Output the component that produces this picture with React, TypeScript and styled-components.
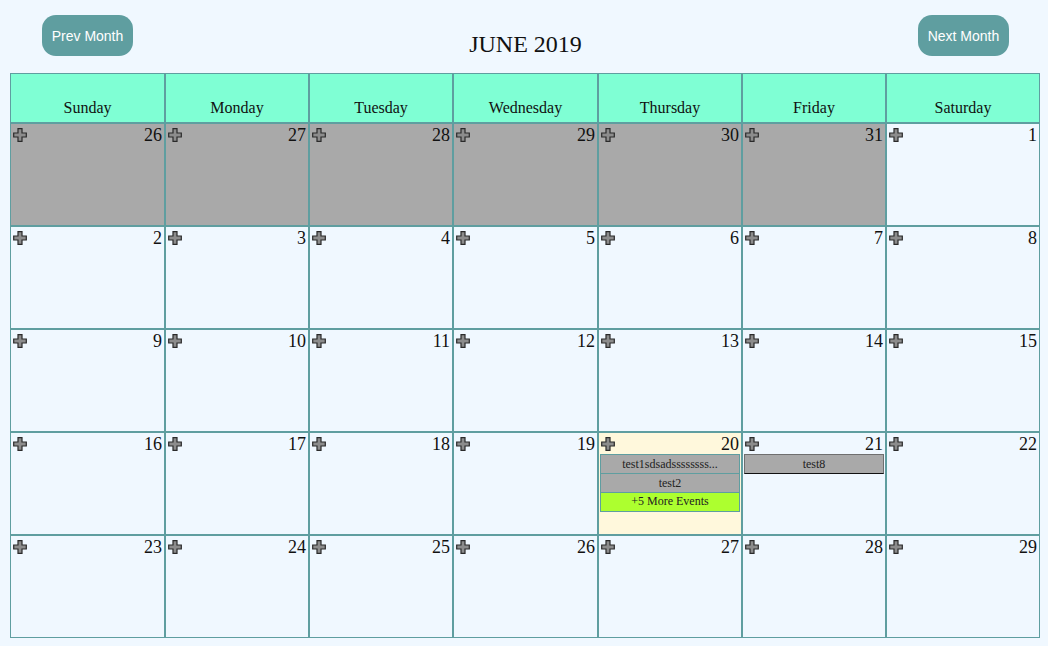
import styled, { createGlobalStyle } from 'styled-components'

const GlobalStyle = createGlobalStyle`
  html, body {
    margin: 0;
    padding: 0;
    background: #f0f8ff;
  }
  body {
    font-family: "Liberation Serif", "Times New Roman", serif;
    color: #111;
  }
`

type CalEvent = { title: string; kind?: 'more' | 'plain' }

type Day = {
  date: number
  otherMonth?: boolean
  today?: boolean
  events?: CalEvent[]
}

const weekDays = ['Sunday', 'Monday', 'Tuesday', 'Wednesday', 'Thursday', 'Friday', 'Saturday']
const columns = '155px 144px 144px 145px 144px 144px 154px'

const eventsByDate: Record<number, CalEvent[]> = {
  20: [
    { title: 'test1sdsadssssssss...' },
    { title: 'test2' },
    { title: '+5 More Events', kind: 'more' },
  ],
  21: [{ title: 'test8', kind: 'plain' }],
}

function buildDays(): Day[] {
  const days: Day[] = []
  for (let d = 26; d <= 31; d++) days.push({ date: d, otherMonth: true })
  for (let d = 1; d <= 29; d++) {
    days.push({ date: d, today: d === 20, events: eventsByDate[d] })
  }
  return days
}

function PlusIcon() {
  return (
    <svg width="14" height="14" viewBox="0 0 14 14">
      <polygon
        points="5,0.7 9,0.7 9,5 13.3,5 13.3,9 9,9 9,13.3 5,13.3 5,9 0.7,9 0.7,5 5,5"
        fill="#8c8c8c"
        stroke="#2a2a2a"
        strokeWidth="1.2"
        strokeLinejoin="miter"
      />
    </svg>
  )
}

export default function App() {
  const days = buildDays()
  return (
    <>
      <GlobalStyle />
      <Page>
        <TopBar>
          <NavButton type="button">Prev Month</NavButton>
          <Title>JUNE 2019</Title>
          <NavButton type="button">Next Month</NavButton>
        </TopBar>
        <Grid>
          {weekDays.map((w) => (
            <HeadCell key={w}>{w}</HeadCell>
          ))}
          {days.map((day, i) => (
            <DayCell key={i} $otherMonth={day.otherMonth} $today={day.today}>
              <DayTop>
                <PlusIcon />
                <DateNum>{day.date}</DateNum>
              </DayTop>
              {day.events && (
                <EventList>
                  {day.events.map((ev, j) => (
                    <EventBar key={j} $kind={ev.kind}>
                      {ev.title}
                    </EventBar>
                  ))}
                </EventList>
              )}
            </DayCell>
          ))}
        </Grid>
      </Page>
    </>
  )
}

const Page = styled.div`
  width: 1048px;
  height: 646px;
`

const TopBar = styled.div`
  display: flex;
  justify-content: space-between;
  align-items: flex-start;
  box-sizing: border-box;
  height: 73px;
  padding: 15px 39px 0 42px;
`

const NavButton = styled.button`
  width: 91px;
  height: 41px;
  padding: 0;
  border: none;
  border-radius: 14px;
  background: #5f9ea0;
  color: #fff;
  font-family: "Liberation Sans", Arial, sans-serif;
  font-size: 14px;
`

const Title = styled.h1`
  margin: 17px 0 0;
  font-size: 24px;
  line-height: 24px;
  font-weight: normal;
  color: #111;
`

const Grid = styled.div`
  display: grid;
  grid-template-columns: ${columns};
  grid-template-rows: 50px repeat(5, 103px);
  margin-left: 10px;
  width: 1030px;
`

const HeadCell = styled.div`
  display: flex;
  align-items: flex-end;
  justify-content: center;
  box-sizing: border-box;
  border: 1px solid #5f9ea0;
  background: #7fffd4;
  padding-bottom: 5px;
  font-size: 16px;
  line-height: 18px;
`

const DayCell = styled.div<{ $otherMonth?: boolean; $today?: boolean }>`
  box-sizing: border-box;
  border: 1px solid #5f9ea0;
  background: ${(p) => (p.$otherMonth ? '#a9a9a9' : p.$today ? '#fff8dc' : '#f0f8ff')};
  padding: 1px 1px 0 1px;
  overflow: hidden;
`

const DayTop = styled.div`
  display: flex;
  justify-content: space-between;
  align-items: center;
  height: 20px;
  padding-left: 1px;
  padding-right: 1px;
`

const DateNum = styled.span`
  font-size: 18px;
  line-height: 20px;
`

const EventList = styled.div`
  display: flex;
  flex-direction: column;
`

const EventBar = styled.div<{ $kind?: 'more' | 'plain' }>`
  box-sizing: border-box;
  height: ${(p) => (p.$kind === 'more' ? '18px' : '20px')};
  border: 1px solid ${(p) => (p.$kind === 'plain' ? '#6f6f6f' : '#5f9ea0')};
  border-bottom-color: ${(p) => (p.$kind === 'plain' ? '#111' : '#5f9ea0')};
  background: ${(p) => (p.$kind === 'more' ? '#adff2f' : '#a9a9a9')};
  color: #222;
  font-size: 12px;
  line-height: ${(p) => (p.$kind === 'more' ? '16px' : '18px')};
  text-align: center;
  white-space: nowrap;
  overflow: hidden;

  & + & {
    border-top: none;
    height: ${(p) => (p.$kind === 'more' ? '17px' : '19px')};
  }
`
